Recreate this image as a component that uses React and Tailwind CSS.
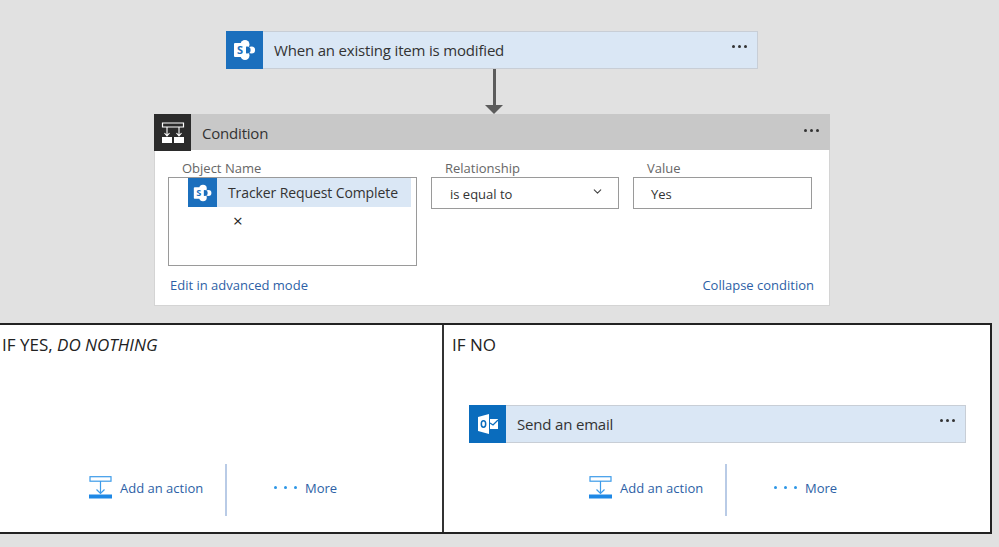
import React from "react";
import { ChevronDown } from "lucide-react";

const font = "font-['Open_Sans','Noto_Sans',sans-serif]";

function SharePointIcon({ size = 24 }) {
  return (
    <svg width={size} height={size} viewBox="0 0 24 24">
      <circle cx="12" cy="6.5" r="4.5" fill="#fff" />
      <circle cx="18.5" cy="12" r="3.6" fill="#fff" />
      <circle cx="12" cy="17.5" r="4.5" fill="#fff" />
      <circle cx="14" cy="12" r="3.6" fill="#1b6fbd" />
      <rect x="1" y="5" width="12" height="14" rx="1" fill="#fff" />
      <text x="7" y="16" textAnchor="middle" fontSize="11" fontWeight="700" fill="#1b6fbd" fontFamily="Open Sans">
        S
      </text>
    </svg>
  );
}

function OutlookIcon() {
  return (
    <svg width="24" height="24" viewBox="0 0 24 24">
      <path d="M2 5 L13 2 V22 L2 19 Z" fill="#fff" />
      <path d="M14 7 H22 V17 H14 Z" fill="#fff" />
      <path d="M14 11 L17 13 L22 8" fill="none" stroke="#0a6cbd" strokeWidth="1.3" />
      <ellipse cx="7.5" cy="12" rx="2.2" ry="3.2" fill="none" stroke="#0a6cbd" strokeWidth="1.5" />
    </svg>
  );
}

function ConditionIcon() {
  return (
    <svg width="24" height="24" viewBox="0 0 24 24">
      <path d="M1.5 2 H22.5 V6 H1.5 Z" fill="none" stroke="#fff" strokeWidth="1.2" />
      <path d="M6 6 V15 M18 6 V15 M3.5 12 L6 15 L8.5 12 M15.5 12 L18 15 L20.5 12" fill="none" stroke="#fff" strokeWidth="1.1" />
      <rect x="1" y="16" width="10" height="6" fill="#fff" />
      <rect x="13" y="16" width="10" height="6" fill="#fff" />
    </svg>
  );
}

function AddActionIcon() {
  return (
    <svg width="23" height="23" viewBox="0 0 23 23" className="mb-[6px]">
      <rect x="1" y="0.7" width="21" height="4.5" fill="none" stroke="#3d9be9" strokeWidth="1.2" />
      <path d="M11.5 5 V17 M7.5 13.5 L11.5 17.5 L15.5 13.5" fill="none" stroke="#3d9be9" strokeWidth="1.2" />
      <rect x="0" y="18.5" width="23" height="4" fill="#1e88e5" />
    </svg>
  );
}

function Dots({ color = "bg-[#333]", gap = "gap-[3px]", size = "size-[3px]" }) {
  return (
    <div className={`flex ${gap}`}>
      <span className={`${size} rounded-full ${color}`} />
      <span className={`${size} rounded-full ${color}`} />
      <span className={`${size} rounded-full ${color}`} />
    </div>
  );
}

function ActionCard({ className, color, icon, title }) {
  return (
    <div className={`flex h-[38px] items-stretch border border-[#c8ced6] bg-[#dae7f5] ${className}`}>
      <div className={`flex w-[37px] shrink-0 items-center justify-center -my-px -ml-px ${color}`}>{icon}</div>
      <div className="ml-[11px] flex-1 self-center text-[15px] tracking-[-0.18px] text-[#333]">{title}</div>
      <div className="mr-[10px] mt-[13px]">
        <Dots />
      </div>
    </div>
  );
}

function BranchActions({ className }) {
  return (
    <div className={`flex h-[52px] items-center text-[13px] text-[#2d5fa6] ${className}`}>
      <AddActionIcon />
      <span className="mb-[4px] ml-[8px] w-[83px] whitespace-nowrap">Add an action</span>
      <div className="ml-[22px] h-full w-[2px] bg-[#b9cbe6]" />
      <div className="mb-[6px] ml-[47px]">
        <Dots color="bg-[#2b96e6]" gap="gap-[7px]" />
      </div>
      <span className="mb-[4px] ml-[8px]">More</span>
    </div>
  );
}

export default function App() {
  return (
    <div className={`h-[547px] w-[999px] overflow-hidden bg-[#e1e1e1] pt-[31px] ${font}`}>
      <ActionCard
        className="ml-[226px] w-[532px]"
        color="bg-[#1b6fbd]"
        icon={<SharePointIcon />}
        title="When an existing item is modified"
      />

      {/* arrow */}
      <div className="ml-[485px] flex h-[45px] w-[18px] flex-col items-center">
        <div className="w-[3px] flex-1 bg-[#5c5c5c]" />
        <svg width="18" height="9" viewBox="0 0 18 9">
          <path d="M0 0 H18 L9 9 Z" fill="#5c5c5c" />
        </svg>
      </div>

      {/* condition card */}
      <div className="ml-[154px] h-[192px] w-[676px] border border-t-0 border-[#d4d4d4] bg-white">
        <div className="-mx-px flex h-[36px] items-center bg-[#c8c8c8]">
          <div className="flex h-[37px] w-[37px] items-center justify-center self-start bg-[#2b2b2b]">
            <ConditionIcon />
          </div>
          <span className="ml-[11px] mt-[2px] flex-1 text-[15px] tracking-[-0.2px] text-[#333]">Condition</span>
          <div className="mb-[4px] mr-[11px]">
            <Dots />
          </div>
        </div>

        <div className="flex h-[115px] items-start pl-[13px] pt-[11px]">
          <div className="w-[249px]">
            <div className="ml-[14px] h-[16px] text-[13px] leading-[14px] text-[#666]">Object Name</div>
            <div className="h-[89px] border border-[#9a9a9a] bg-white">
              <div className="ml-[19px] flex h-[29px] w-[223px] items-center bg-[#dae7f5]">
                <div className="flex h-[29px] w-[29px] items-center justify-center bg-[#1b6fbd]">
                  <SharePointIcon size={20} />
                </div>
                <span className="ml-[11px] whitespace-nowrap text-[14px] tracking-[-0.1px] text-[#333]">Tracker Request Complete</span>
              </div>
              <div className="ml-[64px] mt-[5px] text-[17px] leading-[18px] text-[#222]">×</div>
            </div>
          </div>

          <div className="ml-[14px] w-[188px]">
            <div className="ml-[14px] h-[16px] text-[13px] leading-[14px] text-[#666]">Relationship</div>
            <div className="flex h-[32px] items-center border border-[#9a9a9a] pl-[18px] pr-[14px] pt-[3px] text-[13px] text-[#333]">
              <span className="flex-1">is equal to</span>
              <ChevronDown size={13} strokeWidth={2} className="mb-[6px] text-[#444]" />
            </div>
          </div>

          <div className="ml-[14px] w-[179px]">
            <div className="ml-[14px] h-[16px] text-[13px] leading-[14px] text-[#666]">Value</div>
            <div className="flex h-[32px] items-center border border-[#9a9a9a] pl-[17px] pt-[3px] text-[13px] text-[#333]">Yes</div>
          </div>
        </div>

        <div className="flex justify-between pl-[15px] pr-[15px] pt-[11px] text-[13px] leading-[18px] text-[#2d5fa6]">
          <span>Edit in advanced mode</span>
          <span>Collapse condition</span>
        </div>
      </div>

      {/* branches */}
      <div className="mt-[17px] flex h-[211px] w-[992px] border-2 border-l-0 border-[#222] bg-white text-[17px] leading-[24px] text-[#222]">
        <div className="flex w-[444px] flex-col border-r-2 border-[#333] pl-[2px]">
          <div className="mt-[8px]">
            IF YES, <em>DO NOTHING</em>
          </div>
          <BranchActions className="ml-[87px] mt-[107px]" />
        </div>
        <div className="flex flex-1 flex-col">
          <div className="ml-[8px] mt-[8px]">IF NO</div>
          <ActionCard
            className="ml-[25px] mt-[48px] w-[497px]"
            color="bg-[#0a6cbd]"
            icon={<OutlookIcon />}
            title="Send an email"
          />
          <BranchActions className="ml-[145px] mt-[21px]" />
        </div>
      </div>
    </div>
  );
}
